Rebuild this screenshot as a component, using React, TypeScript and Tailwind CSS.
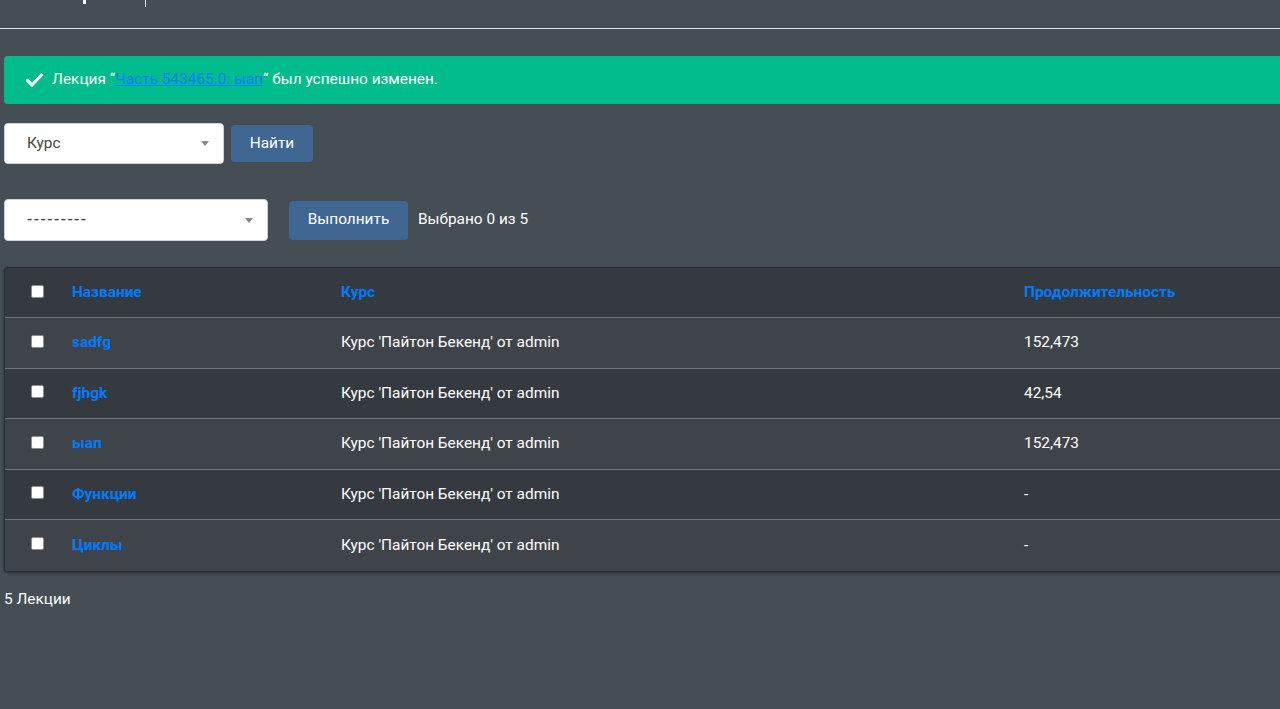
import React from 'react';

const rows = [
  { name: 'sadfg', course: "Курс 'Пайтон Бекенд' от admin", duration: '152,473' },
  { name: 'fjhgk', course: "Курс 'Пайтон Бекенд' от admin", duration: '42,54' },
  { name: 'ыап', course: "Курс 'Пайтон Бекенд' от admin", duration: '152,473' },
  { name: 'Функции', course: "Курс 'Пайтон Бекенд' от admin", duration: '-' },
  { name: 'Циклы', course: "Курс 'Пайтон Бекенд' от admin", duration: '-' },
];

function Box() {
  return <span className="block w-[13px] h-[13px] bg-white border border-[#8f8f8f] rounded-[2px] -mt-[3px]" />;
}

function Caret() {
  return <span className="w-0 h-0 border-l-[4px] border-r-[4px] border-t-[5px] border-l-transparent border-r-transparent border-t-[#888]" />;
}

export default function App() {
  return (
    <div
      className="w-[1280px] h-[709px] overflow-hidden bg-[#454d55] text-white text-[15.4px]"
      style={{ fontFamily: 'Roboto, "Noto Sans", sans-serif' }}
    >
      {/* top bar remnant */}
      <div className="h-[29px] border-b border-[#dee2e6] flex">
        <span className="ml-[83px] w-[3px] h-[4px] bg-white" />
        <span className="ml-[59px] w-px h-[7px] bg-[#ddd]" />
      </div>

      <div className="w-[1300px] pl-[4px]">
        {/* alert */}
        <div className="mt-[27px] h-[48px] bg-[#00bc8c] rounded-l-[4px] flex items-center pl-[22px]">
          <svg width="17" height="14" viewBox="0 0 17 14" className="mr-[9px]">
            <path d="M1.5 7.5 L6 12 L15.5 2" fill="none" stroke="#fff" strokeWidth="3.2" strokeLinecap="round" strokeLinejoin="round" />
          </svg>
          <span>
            Лекция “<a className="text-[#007bff] underline">Часть 543465.0: ыап</a>“ был успешно изменен.
          </span>
        </div>

        {/* search */}
        <div className="mt-[19px] flex items-center">
          <div className="w-[220px] h-[41px] bg-white rounded-[4px] border border-[#ced4da] flex items-center justify-between pl-[22px] pr-[14px] text-[#444]">
            <span>Курс</span>
            <Caret />
          </div>
          <button className="ml-[7px] w-[82px] h-[37px] bg-[#3f6791] rounded-[4px] text-white">Найти</button>
        </div>

        {/* actions */}
        <div className="mt-[35px] flex items-center">
          <div className="w-[264px] h-[42px] bg-white rounded-[4px] border border-[#ced4da] flex items-center justify-between pl-[22px] pr-[14px] text-[#444]">
            <span className="tracking-[1.5px] font-medium">---------</span>
            <Caret />
          </div>
          <button className="ml-[21px] w-[119px] h-[39px] bg-[#3f6791] rounded-[4px] text-white">Выполнить</button>
          <span className="ml-[10px]">Выбрано 0 из 5</span>
        </div>

        {/* table */}
        <div className="mt-[26px] rounded-l-[4px] border-l border-t border-b border-[#2a2f34] overflow-hidden shadow-[0_1px_3px_rgba(0,0,0,0.4)]">
          <div className="grid grid-cols-[55px_269px_683px_1fr] h-[50px] bg-[#343a40] items-center border-b border-[#6c757d] font-bold text-[#007bff]">
            <div className="pl-[26px]"><Box /></div>
            <div className="pl-[12px]">Название</div>
            <div className="pl-[12px]">Курс</div>
            <div className="pl-[12px]">Продолжительность</div>
          </div>
          {rows.map((r, i) => (
            <div
              key={r.name}
              className={`grid grid-cols-[55px_269px_683px_1fr] h-[50.5px] items-center ${i % 2 === 0 ? 'bg-[#3f444b]' : 'bg-[#343a40]'} ${i < rows.length - 1 ? 'border-b border-[#6c757d]' : ''}`}
            >
              <div className="pl-[26px]"><Box /></div>
              <div className="pl-[12px] font-bold text-[#007bff]">{r.name}</div>
              <div className="pl-[12px]">{r.course}</div>
              <div className="pl-[12px]">{r.duration}</div>
            </div>
          ))}
        </div>

        <div className="mt-[16px]">5 Лекции</div>
      </div>
    </div>
  );
}
